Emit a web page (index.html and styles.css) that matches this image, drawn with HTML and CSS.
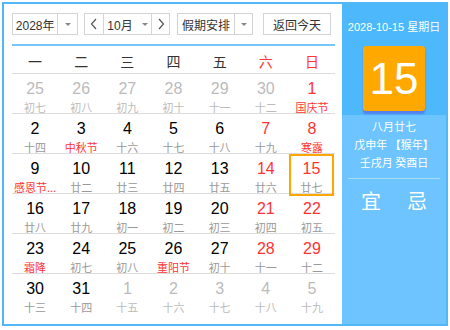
FILE: index.html
```html
<!DOCTYPE html>
<html lang="zh">
<head>
<meta charset="utf-8">
<link rel="stylesheet" href="styles.css">
</head>
<body>
<div class="cal">
  <div class="main">
    <div class="toolbar">
      <div class="sel sel-year"><span class="sel-text">2028年</span><span class="sel-arrow"><i class="tri"></i></span></div>
      <div class="sel sel-month">
        <span class="nav"><svg width="8" height="12" viewBox="0 0 8 12"><path d="M6 1 L1.5 6 L6 11" fill="none" stroke="#555" stroke-width="1.2"/></svg></span>
        <span class="sel-text mid">10月<i class="tri tri-in"></i></span>
        <span class="nav nav-r"><svg width="8" height="12" viewBox="0 0 8 12"><path d="M2 1 L6.5 6 L2 11" fill="none" stroke="#555" stroke-width="1.2"/></svg></span>
      </div>
      <div class="sel sel-hol"><span class="sel-text">假期安排</span><span class="sel-arrow"><i class="tri"></i></span></div>
      <div class="btn-today">返回今天</div>
    </div>
    <div class="weekhead">
      <span>一</span><span>二</span><span>三</span><span>四</span><span>五</span><span class="we">六</span><span class="we">日</span>
    </div>
    <div class="grid">
      <div class="row">
        <div class="cell other"><b>25</b><em>初七</em></div>
        <div class="cell other"><b>26</b><em>初八</em></div>
        <div class="cell other"><b>27</b><em>初九</em></div>
        <div class="cell other"><b>28</b><em>初十</em></div>
        <div class="cell other"><b>29</b><em>十一</em></div>
        <div class="cell other"><b>30</b><em>十二</em></div>
        <div class="cell wk"><b>1</b><em class="fest">国庆节</em></div>
      </div>
      <div class="row">
        <div class="cell"><b>2</b><em>十四</em></div>
        <div class="cell"><b>3</b><em class="fest">中秋节</em></div>
        <div class="cell"><b>4</b><em>十六</em></div>
        <div class="cell"><b>5</b><em>十七</em></div>
        <div class="cell"><b>6</b><em>十八</em></div>
        <div class="cell wk"><b>7</b><em>十九</em></div>
        <div class="cell wk"><b>8</b><em class="fest">寒露</em></div>
      </div>
      <div class="row">
        <div class="cell"><b>9</b><em class="fest">感恩节...</em></div>
        <div class="cell"><b>10</b><em>廿二</em></div>
        <div class="cell"><b>11</b><em>廿三</em></div>
        <div class="cell"><b>12</b><em>廿四</em></div>
        <div class="cell"><b>13</b><em>廿五</em></div>
        <div class="cell wk"><b>14</b><em>廿六</em></div>
        <div class="cell wk today"><b>15</b><em>廿七</em></div>
      </div>
      <div class="row">
        <div class="cell"><b>16</b><em>廿八</em></div>
        <div class="cell"><b>17</b><em>廿九</em></div>
        <div class="cell"><b>18</b><em>初一</em></div>
        <div class="cell"><b>19</b><em>初二</em></div>
        <div class="cell"><b>20</b><em>初三</em></div>
        <div class="cell wk"><b>21</b><em>初四</em></div>
        <div class="cell wk"><b>22</b><em>初五</em></div>
      </div>
      <div class="row">
        <div class="cell"><b>23</b><em class="fest">霜降</em></div>
        <div class="cell"><b>24</b><em>初七</em></div>
        <div class="cell"><b>25</b><em>初八</em></div>
        <div class="cell"><b>26</b><em class="fest">重阳节</em></div>
        <div class="cell"><b>27</b><em>初十</em></div>
        <div class="cell wk"><b>28</b><em>十一</em></div>
        <div class="cell wk"><b>29</b><em>十二</em></div>
      </div>
      <div class="row last">
        <div class="cell"><b>30</b><em>十三</em></div>
        <div class="cell"><b>31</b><em>十四</em></div>
        <div class="cell other"><b>1</b><em>十五</em></div>
        <div class="cell other"><b>2</b><em>十六</em></div>
        <div class="cell other"><b>3</b><em>十七</em></div>
        <div class="cell other"><b>4</b><em>十八</em></div>
        <div class="cell other"><b>5</b><em>十九</em></div>
      </div>
    </div>
  </div>
  <div class="side">
    <div class="side-top">
      <div class="side-date">2028-10-15 星期日</div>
      <div class="bigday">15</div>
    </div>
    <div class="lunar">
      <div>八月廿七</div>
      <div>戊申年 【猴年】</div>
      <div>壬戌月 癸酉日</div>
    </div>
    <div class="yiji"><span>宜</span><span>忌</span></div>
  </div>
</div>
</body>
</html>
```
FILE: styles.css
```css
* { box-sizing: border-box; }
html, body { margin: 0; padding: 0; background: #fff; }
body {
  font-family: "Liberation Sans", Arial, "Noto Sans CJK SC", sans-serif;
  color: #333;
}
.cal {
  margin: 2px 0 0 2px;
  width: 446px;
  height: 324px;
  border: 2px solid #52b7f8;
  display: flex;
}
.main {
  width: 338px;
  padding: 9px 7px 0 8px;
}
.toolbar {
  display: flex;
  height: 22px;
  font-size: 12px;
}
.sel {
  display: flex;
  border: 1px solid #d4d4d4;
  background: #fff;
  height: 22px;
}
.sel-text {
  display: flex;
  align-items: center;
  justify-content: center;
  color: #333;
}
.sel-arrow {
  display: flex;
  align-items: center;
  justify-content: center;
  border-left: 1px solid #d4d4d4;
  width: 20px;
}
.tri {
  width: 0;
  height: 0;
  border-left: 3px solid transparent;
  border-right: 3px solid transparent;
  border-top: 3px solid #888;
}
.tri-in { margin-left: 9px; }
.sel-year { width: 66px; }
.sel-year .sel-text { width: 45px; }
.sel-month { width: 86px; margin-left: 6px; }
.nav {
  width: 19px;
  display: flex;
  align-items: center;
  justify-content: center;
  border-right: 1px solid #d4d4d4;
}
.nav-r { border-right: 0; border-left: 1px solid #d4d4d4; width: 18px; }
.mid { flex: 1; }
.sel-hol { width: 76px; margin-left: 7px; }
.sel-hol .sel-text { width: 57px; }
.sel-hol .sel-arrow { width: 18px; }
.btn-today {
  margin-left: 10px;
  width: 68px;
  height: 22px;
  border: 1px solid #d4d4d4;
  display: flex;
  align-items: center;
  justify-content: center;
  color: #333;
}
.weekhead {
  margin-top: 9px;
  border-top: 2px solid #74c6fb;
  border-bottom: 1px solid #dcdcdc;
  height: 30px;
  display: grid;
  grid-template-columns: repeat(7, 1fr);
  align-items: center;
  font-size: 14px;
  color: #333;
  text-align: center;
  font-family: "Noto Sans CJK SC", sans-serif;
}
.weekhead span { line-height: 16px; padding-top: 3px; }
.weekhead .we { color: #f33; }
.grid { display: flex; flex-direction: column; }
.row {
  display: grid;
  grid-template-columns: repeat(7, 1fr);
  height: 40px;
  border-bottom: 1px solid #dcdcdc;
}
.row.last { border-bottom: 0; }
.cell {
  display: flex;
  flex-direction: column;
  align-items: center;
  padding-top: 6px;
}
.cell b {
  font-weight: normal;
  font-size: 16px;
  line-height: 17px;
  color: #000;
  font-family: "Liberation Sans", Arial, sans-serif;
}
.cell em {
  font-style: normal;
  font-size: 11px;
  line-height: 14px;
  margin-top: 3px;
  color: #999;
  font-family: "Noto Sans CJK SC", sans-serif;
}
.cell em.fest { color: #f33; }
.cell.wk b { color: #f33; }
.cell.other b { color: #bbb; }
.cell.other em { color: #bbb; }
.cell.today {
  border: 2px solid #ffa600;
  padding-top: 4px;
  margin: 0 1px 0 0;
}
.side {
  flex: 1;
  background: #6ec4fe;
  color: #fff;
  display: flex;
  flex-direction: column;
  align-items: center;
  font-family: "Noto Sans CJK SC", sans-serif;
}
.side-top {
  width: 100%;
  background: #4db8fb;
  display: flex;
  flex-direction: column;
  align-items: center;
  height: 111px;
  padding-top: 15px;
}
.side-date {
  font-size: 11px;
  line-height: 16px;
  font-family: "Liberation Sans", Arial, "Noto Sans CJK SC", sans-serif;
}
.bigday {
  margin-top: 11px;
  width: 62px;
  height: 65px;
  background: #ffa800;
  border-radius: 3px;
  box-shadow: 0 3px 2px rgba(90, 90, 230, 0.6);
  font-family: "Liberation Sans", Arial, sans-serif;
  font-size: 44px;
  line-height: 65px;
  text-align: center;
  color: #fff;
}
.lunar {
  margin-top: 2px;
  width: 92px;
  border-bottom: 1px solid #a8dcff;
  padding-bottom: 7px;
  text-align: center;
  font-size: 11px;
  line-height: 18px;
}
.yiji {
  margin-top: 9px;
  display: flex;
  gap: 26px;
  font-size: 20px;
  line-height: 26px;
}
```
